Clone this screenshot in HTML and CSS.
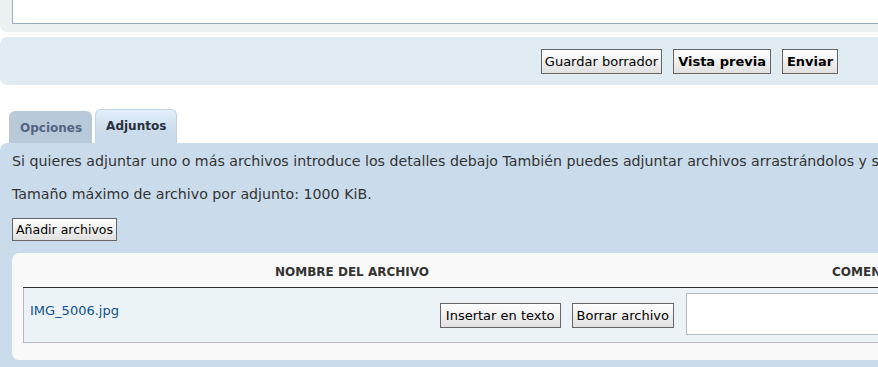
FILE: index.html
```html
<!DOCTYPE html>
<html lang="es">
<head>
    <meta charset="UTF-8">
    <title>Publicar respuesta</title>
    <link rel="stylesheet" href="styles.css">
</head>
<body>
    <div class="wrap">
        <div class="panel-editor">
            <div class="message-box"></div>
        </div>

        <div class="panel-submit">
            <button class="button2">Guardar borrador</button>
            <button class="button1">Vista previa</button>
            <button class="button1">Enviar</button>
        </div>

        <ul class="tabs">
            <li class="tab">Opciones</li>
            <li class="tab active">Adjuntos</li>
        </ul>

        <div class="panel-attach">
            <p>Si quieres adjuntar uno o más archivos introduce los detalles debajo También puedes adjuntar archivos arrastrándolos y soltándolos en el cuadro de mensaje.</p>
            <p>Tamaño máximo de archivo por adjunto: 1000 KiB.</p>
            <button class="button2 add-files">Añadir archivos</button>

            <div class="file-list">
                <div class="file-head">
                    <div class="col-name">Nombre del archivo</div>
                    <div class="col-comment">Comentario del archivo</div>
                </div>
                <div class="file-row">
                    <div class="col-name file-name">
                        <a href="#">IMG_5006.jpg</a>
                        <div class="file-actions">
                            <button class="button2">Insertar en texto</button>
                            <button class="button2">Borrar archivo</button>
                        </div>
                    </div>
                    <div class="col-comment">
                        <div class="comment-box"></div>
                    </div>
                </div>
            </div>
        </div>
    </div>
</body>
</html>
```

FILE: styles.css
```css
body {
    margin: 0;
    font-family: "DejaVu Sans", Verdana, sans-serif;
    color: #333;
    background-color: #fff;
    overflow: hidden;
}

.wrap {
    width: 1379px;
}

.panel-editor {
    background-color: #ecf1f3;
    padding: 0 0 8px 12px;
    border-radius: 0 0 0 7px;
}

.message-box {
    height: 23px;
    background-color: #fff;
    border: 1px solid #98aec0;
    border-top: none;
}

.panel-submit {
    margin-top: 5px;
    background-color: #e1ebf2;
    border-radius: 7px;
    height: 48px;
    display: flex;
    justify-content: center;
    align-items: center;
    gap: 11px;
}

button {
    font-family: "DejaVu Sans", Verdana, sans-serif;
    font-size: 13px;
    color: #000;
    border: 1px solid #666;
    background: linear-gradient(#ffffff, #e0e0e0);
    padding: 3px 4px 2px 4px;
    margin: 0;
    line-height: 18px;
}

.button2 {
    padding: 3px 3px 2px 3px;
}

.button1 {
    font-weight: bold;
}

.tabs {
    list-style: none;
    margin: 24px 0 0 9px;
    padding: 0;
    display: flex;
    align-items: flex-end;
    gap: 3px;
}

.tab {
    font-size: 12px;
    font-weight: bold;
    color: #536482;
    background-color: #b8c9d9;
    border-radius: 6px 6px 0 0;
    padding: 0 10px 0 11px;
    height: 32px;
    line-height: 34px;
}

.tab.active {
    color: #28313f;
    background: linear-gradient(#e4f0fb, #cadceb 60%);
    border: 1px solid #bcd4ea;
    border-bottom: none;
    height: 33px;
    line-height: 32px;
    padding: 0 10px 0 10px;
}

.panel-attach {
    background-color: #cadceb;
    border-radius: 7px 0 0 0;
    padding: 9px 12px 7px 12px;
}

.panel-attach p {
    margin: 0 0 15px 0;
    font-size: 14.2px;
    line-height: 18px;
    white-space: nowrap;
}

.add-files {
    font-size: 12.5px;
    line-height: 16px;
    display: block;
    margin-top: 15px;
}

.panel-attach p + p {
    margin-bottom: 0;
}

.file-list {
    margin-top: 12px;
    background-color: #f9f9f9;
    border-radius: 7px;
    padding: 7px 11px 17px 11px;
}

.file-head {
    display: flex;
    border-bottom: 1px solid #333;
    font-size: 12px;
    font-weight: bold;
    text-transform: uppercase;
    height: 27px;
    line-height: 25px;
}

.col-name {
    width: 658px;
    text-align: center;
}

.col-comment {
    width: 664px;
    text-align: left;
    padding-left: 151px;
    box-sizing: border-box;
}

.file-row {
    display: flex;
    background-color: #ecf3f7;
    border-left: 1px solid #b4bac0;
    border-bottom: 1px solid #b4bac0;
    height: 54px;
}

.file-name {
    display: flex;
    justify-content: space-between;
    text-align: left;
    padding: 15px 7px 0 6px;
    box-sizing: border-box;
    width: 657px;
}

.file-name a {
    color: #105289;
    text-decoration: none;
    font-size: 13px;
}

.file-actions {
    display: flex;
    gap: 11px;
    align-items: flex-start;
}

.file-actions button {
    padding: 3px 5px 2px 5px;
}

.file-actions button + button {
    padding: 3px 4px 2px 4px;
}

.file-row .col-comment {
    padding: 5px 0 0 5px;
}

.comment-box {
    height: 40px;
    background-color: #fff;
    border: 1px solid #b4bac0;
}
```
